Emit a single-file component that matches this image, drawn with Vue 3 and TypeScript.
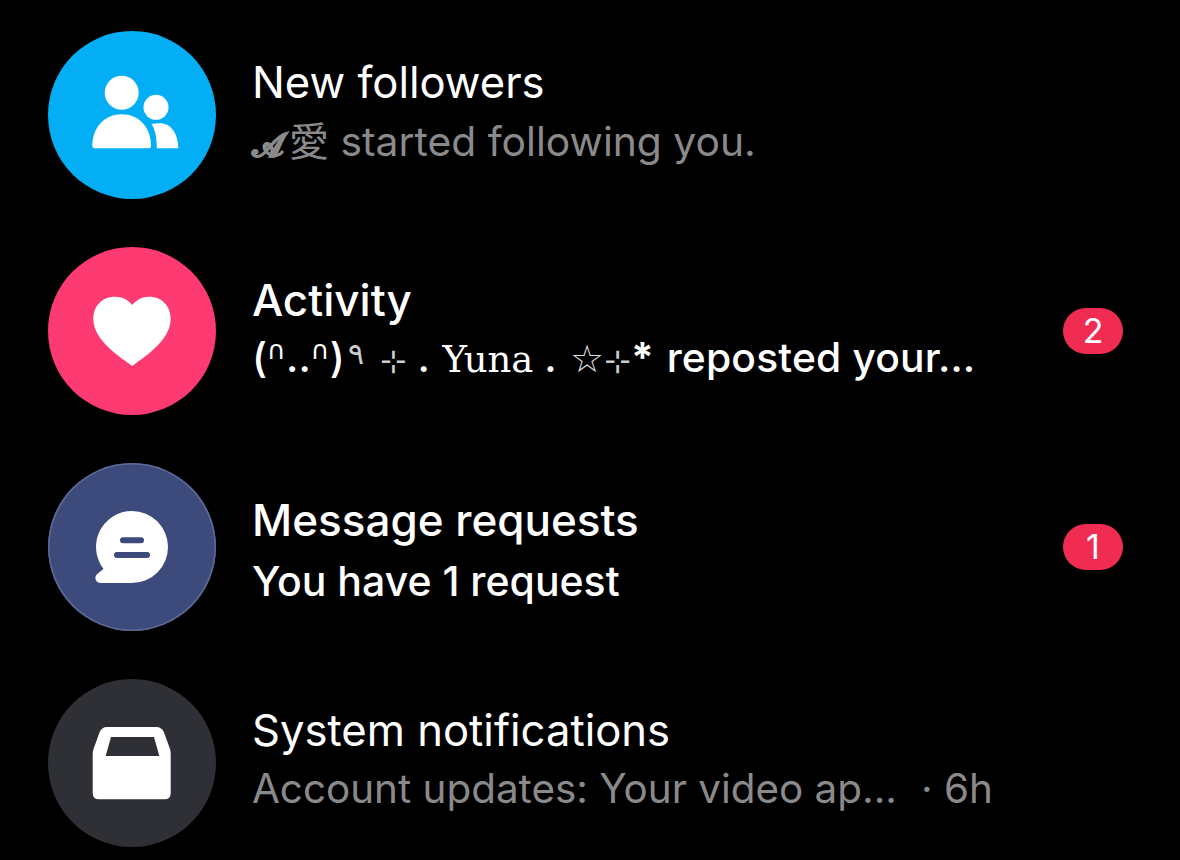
<script setup lang="ts">
const arch = '∩'
</script>

<template>
  <main class="list">
    <section class="row">
      <div class="avatar blue">
        <svg viewBox="0 0 168 168" class="icon">
          <circle cx="73.7" cy="61.7" r="17" fill="#fff" />
          <path d="M44.3 115 C44.3 96 57 83.3 73.7 83.3 C90.5 83.3 103 96 103 115 Q103 117.3 100.8 117.3 H46.5 Q44.3 117.3 44.3 115 Z" fill="#fff" />
          <circle cx="108" cy="76.3" r="12.5" fill="#fff" />
          <path d="M103.5 93 Q107 92.3 112 92.3 C122 92.3 130 101 130.3 117.3 H108.8 C108.8 107 107.5 99 103.5 93 Z" fill="#fff" />
        </svg>
      </div>
      <div class="text">
        <div class="title">New followers</div>
        <div class="sub muted"><span class="script">𝓐</span><span class="cjk">愛</span> started following you.</div>
      </div>
    </section>

    <section class="row">
      <div class="avatar pink">
        <svg viewBox="0 0 168 168" class="icon">
          <path d="M84.3 119 C74 111 45.3 94 45.3 72 C45.3 58 55 49.7 67 49.7 C74.5 49.7 80.5 53 84.3 58 C88 53 94 49.7 101 49.7 C113 49.7 122.7 58 122.7 72 C122.7 94 94.5 111 84.3 119 Z" fill="#fff" />
        </svg>
      </div>
      <div class="text">
        <div class="title medium">Activity</div>
        <div class="sub medium raised">(<span class="arch">{{ arch }}</span>..<span class="arch">{{ arch }}</span>)<span class="nine">٩</span> <span class="spark">⊹</span> . <span class="serif">Yuna</span> . <span class="star">☆</span><span class="spark">⊹</span><span class="bold">*</span> <span class="tail">reposted your…</span></div>
      </div>
      <span class="badge">2</span>
    </section>

    <section class="row">
      <div class="avatar indigo">
        <svg viewBox="0 0 168 168" class="icon">
          <path d="M84 48 A36 36 0 1 1 84 120 H53 C47.5 120 45.5 114 49.5 110.8 L55.5 106 A36 36 0 0 1 84 48 Z" fill="#fff" />
          <rect x="72" y="74.3" width="24" height="6" rx="3" fill="#3d4a7c" />
          <rect x="66" y="89" width="36" height="6" rx="3" fill="#3d4a7c" />
        </svg>
      </div>
      <div class="text requests">
        <div class="title medium">Message requests</div>
        <div class="sub medium wide">You have 1 request</div>
      </div>
      <span class="badge">1</span>
    </section>

    <section class="row">
      <div class="avatar dark">
        <svg viewBox="0 0 168 168" class="icon">
          <path d="M59 48 H108 Q114 48 116 53.5 L122 70 Q122.7 72 122.7 75 V114 Q122.7 120.3 116.5 120.3 H51 Q44.7 120.3 44.7 114 V75 Q44.7 72 45.5 70 L51.5 53.5 Q53.5 48 59 48 Z" fill="#fff" />
          <path d="M63 58 H106 L111.3 77 H57.7 Z" fill="#2f2f36" />
        </svg>
      </div>
      <div class="text">
        <div class="title">System notifications</div>
        <div class="sub muted meta"><span>Account updates: Your video ap...</span><span class="time">· 6h</span></div>
      </div>
    </section>
  </main>
</template>

<style>
html, body { margin: 0; background: #000; }
</style>

<style scoped>
.list {
  width: 1180px;
  height: 860px;
  box-sizing: border-box;
  padding: 31px 57px 0 48px;
  display: flex;
  flex-direction: column;
  gap: 48px;
  background: #000;
  overflow: hidden;
  font-family: Inter, "Noto Sans CJK SC", sans-serif;
  color: #fff;
}
.row {
  display: flex;
  align-items: center;
  height: 168px;
  flex: none;
}
.avatar {
  width: 168px;
  height: 168px;
  flex: none;
  border-radius: 50%;
  box-sizing: border-box;
  position: relative;
}
.icon {
  position: absolute;
  inset: 0;
  width: 168px;
  height: 168px;
}
.blue { background: #03aef5; }
.pink { background: #fe3a73; }
.indigo { background: #3d4a7c; box-shadow: inset 0 0 0 1.5px #5f6a96; }
.dark { background: #2f2f36; }
.text {
  flex: 1;
  margin-left: 36px;
  margin-top: -6px;
  display: flex;
  flex-direction: column;
  gap: 8px;
}
.requests { gap: 11px; margin-top: 7px; }
.title {
  font-size: 43.6px;
  line-height: 50px;
  height: 50px;
}
.title.medium { font-size: 44px; }
.sub {
  font-size: 40.8px;
  line-height: 50px;
  height: 50px;
  white-space: nowrap;
}
.sub.wide { font-size: 41px; }
.sub.raised { margin-top: -1px; }
.medium { font-weight: 500; }
.muted { color: #8a8a8a; }
.script {
  font-family: "DejaVu Serif", serif;
  font-weight: 700;
  font-size: 33px;
  line-height: 1;
  -webkit-text-stroke: 0.8px #8a8a8a;
}
.cjk { font-family: "Noto Sans CJK SC", sans-serif; font-size: 40px; line-height: 1; margin-left: 5px; }
.arch { font-family: "DejaVu Sans", sans-serif; font-size: 26px; line-height: 1; vertical-align: 13px; }
.nine {
  font-family: "DejaVu Sans", sans-serif;
  font-weight: 400;
  font-size: 30px;
  line-height: 1;
  vertical-align: 8px;
  color: #ccc;
  margin: 0 5px 0 3px;
}
.spark { font-family: "DejaVu Sans", sans-serif; font-weight: 400; font-size: 32px; line-height: 1; color: #ccc; }
.star { font-family: "DejaVu Sans", sans-serif; font-weight: 400; font-size: 38px; line-height: 1; color: #ddd; margin-left: 3px; }
.bold { font-weight: 700; }
.serif { font-family: "DejaVu Serif", serif; font-weight: 400; font-size: 37px; line-height: 1; margin-left: 2px; }
.tail { letter-spacing: 0.15px; margin-left: 2px; }
.meta { display: flex; gap: 24px; font-size: 40.4px; }
.badge {
  width: 60px;
  height: 46px;
  flex: none;
  border-radius: 23px;
  background: #f12c52;
  display: flex;
  align-items: center;
  justify-content: center;
  font-size: 34px;
  line-height: 46px;
}
</style>
